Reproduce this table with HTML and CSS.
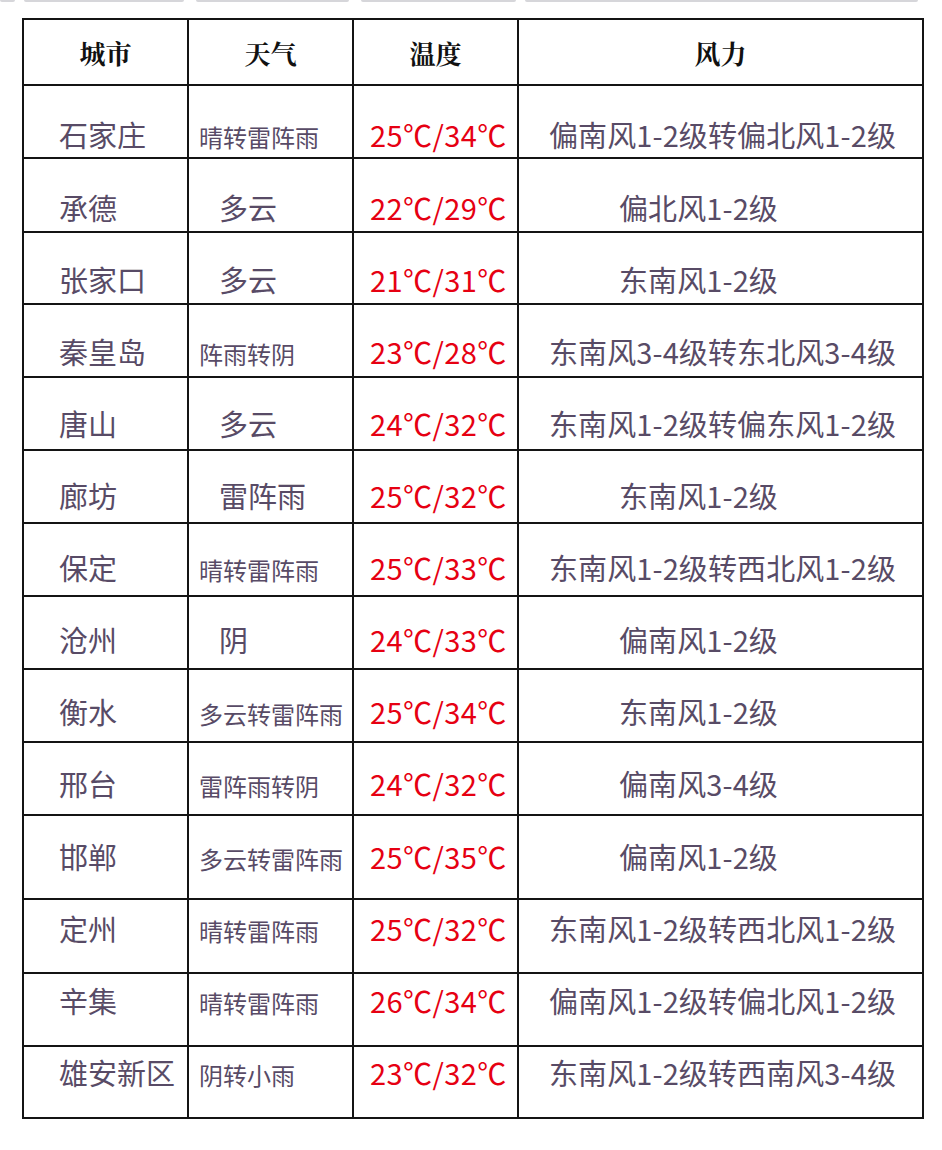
FILE: index.html
```html
<!DOCTYPE html>
<html lang="zh-CN">
<head>
<meta charset="utf-8">
<title>河北天气</title>
<link rel="stylesheet" href="styles.css">
</head>
<body>
<div class="topbars">
  <span class="bar b0"></span>
  <span class="bar b1"></span>
  <span class="bar b2"></span>
  <span class="bar b3"></span>
  <span class="bar b4"></span>
</div>
<table class="weather">
  <colgroup>
    <col class="c-city"><col class="c-wx"><col class="c-temp"><col class="c-wind">
  </colgroup>
  <thead>
    <tr class="head"><th>城市</th><th>天气</th><th>温度</th><th>风力</th></tr>
  </thead>
  <tbody>
    <tr class="r1"><td class="city">石家庄</td><td class="wx sm">晴转雷阵雨</td><td class="temp">25℃/34℃</td><td class="wind">偏南风1-2级转偏北风1-2级</td></tr>
    <tr class="r2"><td class="city">承德</td><td class="wx">多云</td><td class="temp">22℃/29℃</td><td class="wind short">偏北风1-2级</td></tr>
    <tr class="r3"><td class="city">张家口</td><td class="wx">多云</td><td class="temp">21℃/31℃</td><td class="wind short">东南风1-2级</td></tr>
    <tr class="r4"><td class="city">秦皇岛</td><td class="wx sm">阵雨转阴</td><td class="temp">23℃/28℃</td><td class="wind">东南风3-4级转东北风3-4级</td></tr>
    <tr class="r5"><td class="city">唐山</td><td class="wx">多云</td><td class="temp">24℃/32℃</td><td class="wind">东南风1-2级转偏东风1-2级</td></tr>
    <tr class="r6"><td class="city">廊坊</td><td class="wx">雷阵雨</td><td class="temp">25℃/32℃</td><td class="wind short">东南风1-2级</td></tr>
    <tr class="r7"><td class="city">保定</td><td class="wx sm">晴转雷阵雨</td><td class="temp">25℃/33℃</td><td class="wind">东南风1-2级转西北风1-2级</td></tr>
    <tr class="r8"><td class="city">沧州</td><td class="wx">阴</td><td class="temp">24℃/33℃</td><td class="wind short">偏南风1-2级</td></tr>
    <tr class="r9"><td class="city">衡水</td><td class="wx sm">多云转雷阵雨</td><td class="temp">25℃/34℃</td><td class="wind short">东南风1-2级</td></tr>
    <tr class="r10"><td class="city">邢台</td><td class="wx sm">雷阵雨转阴</td><td class="temp">24℃/32℃</td><td class="wind short">偏南风3-4级</td></tr>
    <tr class="r11"><td class="city">邯郸</td><td class="wx sm">多云转雷阵雨</td><td class="temp">25℃/35℃</td><td class="wind short">偏南风1-2级</td></tr>
    <tr class="r12"><td class="city">定州</td><td class="wx sm">晴转雷阵雨</td><td class="temp">25℃/32℃</td><td class="wind">东南风1-2级转西北风1-2级</td></tr>
    <tr class="r13"><td class="city">辛集</td><td class="wx sm">晴转雷阵雨</td><td class="temp">26℃/34℃</td><td class="wind">偏南风1-2级转偏北风1-2级</td></tr>
    <tr class="r14"><td class="city">雄安新区</td><td class="wx sm">阴转小雨</td><td class="temp">23℃/32℃</td><td class="wind">东南风1-2级转西南风3-4级</td></tr>
  </tbody>
</table>
</body>
</html>
```

FILE: styles.css
```css
html, body {
  margin: 0;
  padding: 0;
  background: #ffffff;
}

body {
  font-family: "Noto Sans CJK SC", "Noto Sans", sans-serif;
  color: #584b66;
}

.topbars {
  display: flex;
  height: 3px;
}

.bar {
  display: block;
  height: 2px;
  background: #d6d6da;
  border-radius: 0 0 2px 2px;
}
.b0 { width: 15px; }
.b1 { width: 160px; margin-left: 9px; }
.b2 { width: 153px; margin-left: 12px; }
.b3 { width: 155px; margin-left: 12px; }
.b4 { width: 393px; margin-left: 9px; }

.weather {
  border-collapse: collapse;
  margin: 15px 0 0 22px;
  width: 902px;
  table-layout: fixed;
}

.c-city { width: 165px; }
.c-wx { width: 165px; }
.c-temp { width: 165px; }
.c-wind { width: 405px; }

.weather th,
.weather td {
  border: 2px solid #141414;
  padding: 0;
}

.weather th {
  height: 64px;
  font-family: "Noto Serif CJK SC", "AR PL UMing CN", "Noto Sans CJK SC", serif;
  font-weight: 700;
  font-size: 26px;
  color: #111111;
  text-align: center;
  vertical-align: middle;
}

.weather td {
  vertical-align: baseline;
  font-size: 29px;
  line-height: 30px;
  text-align: left;
  white-space: nowrap;
}

.weather .city { padding-left: 35px; }
.weather .wx { padding-left: 30px; }
.weather .wx.sm { padding-left: 10px; font-size: 24px; }
.weather .temp { padding-left: 16px; color: #e60012; letter-spacing: 0.4px; }
.weather .wind { padding-left: 30px; letter-spacing: 0.1px; }
.weather .wind.short { padding-left: 100px; }

.r1 td { padding-top: 33px; height: 38px; }
.r2 td { padding-top: 33px; height: 39px; }
.r3 td { padding-top: 31px; height: 39px; }
.r4 td { padding-top: 31px; height: 40px; }
.r5 td { padding-top: 30px; height: 41px; }
.r6 td { padding-top: 29px; height: 42px; }
.r7 td { padding-top: 28px; height: 43px; }
.r8 td { padding-top: 27px; height: 44px; }
.r9 td { padding-top: 26px; height: 45px; }
.r10 td { padding-top: 25px; height: 46px; }
.r11 td { padding-top: 25px; height: 57px; }
.r12 td { padding-top: 13px; height: 59px; }
.r13 td { padding-top: 11px; height: 60px; }
.r14 td { padding-top: 10px; height: 60px; }
```
